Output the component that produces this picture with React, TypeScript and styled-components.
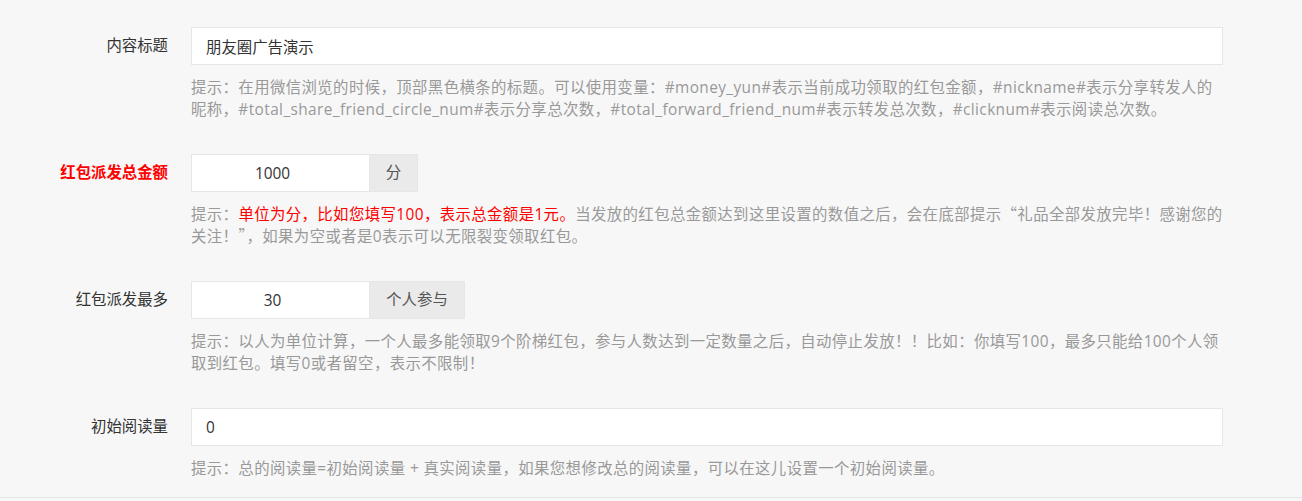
import styled, { createGlobalStyle } from "styled-components";

const GlobalStyle = createGlobalStyle`
  html, body {
    margin: 0;
    padding: 0;
    background: #f7f7f7;
    font-family: "Open Sans", "Noto Sans CJK SC", sans-serif;
    font-size: 15.4px;
    color: #333;
  }
`;

const Form = styled.div`
  padding-top: 27px;
  padding-bottom: 17px;
  border-bottom: 1px solid #e5e5e5;
`;

const FormGroup = styled.div`
  display: grid;
  grid-template-columns: 168px 1032px;
  column-gap: 23px;
  margin-bottom: 33px;
  &:last-child {
    margin-bottom: 0;
  }
`;

const Label = styled.label<{ $danger?: boolean }>`
  text-align: right;
  line-height: 38px;
  height: 38px;
  white-space: nowrap;
  color: ${(p) => (p.$danger ? "#f00" : "#333")};
  font-weight: ${(p) => (p.$danger ? "bold" : "normal")};
`;

const Field = styled.div`
  display: flex;
  flex-direction: column;
`;

const InputGroup = styled.div`
  display: flex;
  height: 38px;
`;

const TextInput = styled.input<{ $center?: boolean; $width?: number }>`
  box-sizing: border-box;
  height: 38px;
  width: ${(p) => (p.$width ? `${p.$width}px` : "100%")};
  border: 1px solid #e6e6e6;
  background: #fff;
  padding: ${(p) => (p.$center ? "0 31px 0 15px" : "0 14px")};
  font: inherit;
  color: #333;
  text-align: ${(p) => (p.$center ? "center" : "left")};
  outline: none;
`;

const Addon = styled.span<{ $width: number }>`
  box-sizing: border-box;
  width: ${(p) => p.$width}px;
  height: 38px;
  line-height: 36px;
  text-align: center;
  background: #eaeaea;
  border: 1px solid #e6e6e6;
  border-left: none;
  color: #555;
`;

const Hint = styled.div`
  margin-top: 12px;
  height: auto;
  line-height: 22px;
  color: #999;
  letter-spacing: 0.4px;
  white-space: nowrap;
`;

const Warn = styled.span`
  color: #f00;
`;

const Quote = styled.span`
  font-family: "Noto Sans CJK SC", sans-serif;
  line-height: 0;
`;

export default function App() {
  return (
    <>
      <GlobalStyle />
      <Form>
        <FormGroup>
          <Label>内容标题</Label>
          <Field>
            <TextInput defaultValue="朋友圈广告演示" />
            <Hint>
              提示：在用微信浏览的时候，顶部黑色横条的标题。可以使用变量：#money_yun#表示当前成功领取的红包金额，#nickname#表示分享转发人的
              <br />
              昵称，#total_share_friend_circle_num#表示分享总次数，#total_forward_friend_num#表示转发总次数，#clicknum#表示阅读总次数。
            </Hint>
          </Field>
        </FormGroup>

        <FormGroup>
          <Label $danger>红包派发总金额</Label>
          <Field>
            <InputGroup>
              <TextInput $center $width={179} defaultValue="1000" />
              <Addon $width={48}>分</Addon>
            </InputGroup>
            <Hint>
              提示：<Warn>单位为分，比如您填写100，表示总金额是1元。</Warn>当发放的红包总金额达到这里设置的数值之后，会在底部提示<Quote>“</Quote>礼品全部发放完毕！感谢您的
              <br />
              关注！<Quote>”</Quote>，如果为空或者是0表示可以无限裂变领取红包。
            </Hint>
          </Field>
        </FormGroup>

        <FormGroup>
          <Label>红包派发最多</Label>
          <Field>
            <InputGroup>
              <TextInput $center $width={179} defaultValue="30" />
              <Addon $width={95}>个人参与</Addon>
            </InputGroup>
            <Hint>
              提示：以人为单位计算，一个人最多能领取9个阶梯红包，参与人数达到一定数量之后，自动停止发放！！比如：你填写100，最多只能给100个人领
              <br />
              取到红包。填写0或者留空，表示不限制！
            </Hint>
          </Field>
        </FormGroup>

        <FormGroup>
          <Label>初始阅读量</Label>
          <Field>
            <TextInput defaultValue="0" />
            <Hint>
              提示：总的阅读量=初始阅读量 + 真实阅读量，如果您想修改总的阅读量，可以在这儿设置一个初始阅读量。
            </Hint>
          </Field>
        </FormGroup>
      </Form>
    </>
  );
}
